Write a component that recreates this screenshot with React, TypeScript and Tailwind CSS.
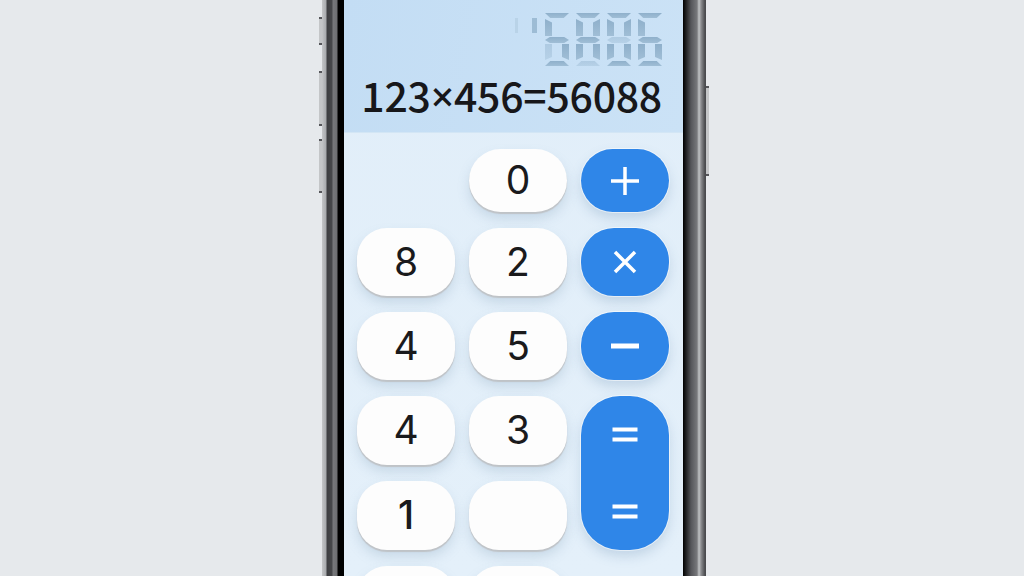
import React from "react";

const SEG = "bg-[linear-gradient(180deg,#8fb0cb,#a0bed6)]";

function Digit({ on, faint = "" }: { on: string; faint?: string }) {
  const o = (k: string) => (on.includes(k) ? "opacity-100" : faint.includes(k) ? "opacity-45" : "opacity-0");
  return (
    <div className="grid grid-cols-[7px_8px_7px] grid-rows-[5px_17px_6px_16px_5px] gap-[1px] w-[24px] h-[53px]" aria-hidden="true">
      <div className={`col-span-3 ${SEG} [clip-path:polygon(0_0,100%_0,78%_100%,22%_100%)] ${o("a")}`} />
      <div className={`${SEG} [clip-path:polygon(0_0,100%_20%,100%_100%,0_100%)] ${o("f")}`} />
      <div />
      <div className={`${SEG} [clip-path:polygon(0_20%,100%_0,100%_100%,0_100%)] ${o("b")}`} />
      <div className={`col-span-3 ${SEG} [clip-path:polygon(20%_0,80%_0,100%_50%,80%_100%,20%_100%,0_50%)] ${o("g")}`} />
      <div className={`${SEG} [clip-path:polygon(0_0,100%_0,100%_82%,0_100%)] ${o("e")}`} />
      <div />
      <div className={`${SEG} [clip-path:polygon(0_0,100%_0,100%_100%,0_82%)] ${o("c")}`} />
      <div className={`col-span-3 ${SEG} [clip-path:polygon(22%_0,78%_0,100%_100%,0_100%)] ${o("d")}`} />
    </div>
  );
}

function Key({ children, className = "" }: { children?: React.ReactNode; className?: string }) {
  return (
    <div
      className={`flex items-center justify-center bg-[#fdfdfd] text-[#1a1a1c] text-[39px] font-[Inter,sans-serif] rounded-[30px] shadow-[0_2px_1px_#bfc3c7,0_7px_12px_rgba(120,150,180,0.25)] ${className}`}
    >
      {children}
    </div>
  );
}

function Blue({ children, className = "" }: { children?: React.ReactNode; className?: string }) {
  return (
    <div
      className={`flex items-center justify-center bg-[#2f86e8] rounded-[33px] shadow-[0_0_0_1px_rgba(255,255,255,0.55),0_6px_12px_rgba(90,130,170,0.25)] ${className}`}
    >
      {children}
    </div>
  );
}

function Equals() {
  return (
    <svg width="26" height="15" viewBox="0 0 26 15" fill="#fff">
      <rect x="0.5" y="0.5" width="25" height="4" />
      <rect x="0.5" y="10.5" width="25" height="4" />
    </svg>
  );
}

export default function App() {
  return (
    <div className="w-[1024px] h-[576px] overflow-hidden bg-[#e6e9ec] flex justify-center pl-[4px]">
      <div className="relative w-[384px] h-[576px] pl-[22px] pr-[23px] bg-[linear-gradient(90deg,#c4c6c8_0,#a8aaad_4px,#3d3e41_5px,#47484b_10px,#77787b_11px,#6e6f72_15px,#000_16px,#000_361px,#55565a_369px,#77787b_375px,#c2c4c6_377px,#8c8d90_379px,#4a4b4e_383px,#4a4b4e_384px)]">
        <div className="absolute left-[-3px] top-[17px] w-[3px] h-[28px] bg-[#c4c6c8] border-y-2 border-[#55565a]" />
        <div className="absolute left-[-3px] top-[71px] w-[3px] h-[55px] bg-[#c4c6c8] border-y-2 border-[#55565a]" />
        <div className="absolute left-[-3px] top-[139px] w-[3px] h-[54px] bg-[#c4c6c8] border-y-2 border-[#55565a]" />
        <div className="absolute right-[-3px] top-[86px] w-[3px] h-[90px] bg-[#c4c6c8] border-y-2 border-[#55565a]" />

        <div className="h-[576px] w-[339px] flex flex-col overflow-hidden bg-[linear-gradient(180deg,#e1eef9,#e4f0fa)]">
          <div className="h-[133px] shrink-0 flex flex-col items-end pr-[21px] pt-[13px] bg-[linear-gradient(100deg,#c3ddf4,#cbe2f6)] border-b border-[#d3e6f5]">
            <div className="flex h-[53px] gap-[7px] items-start" role="img" aria-label="5806">
              <div className="flex gap-[14px] mt-[5px] mr-[1px]">
                <div className="w-[3px] h-[15px] bg-[#b9d3e8]" />
                <div className="w-[5px] h-[15px] bg-[#9dbcd5]" />
              </div>
              <Digit on="afgcd" faint="e" />
              <Digit on="abfegc" faint="d" />
              <Digit on="abfecd" faint="g" />
              <Digit on="afgecd" />
            </div>
            <div className="mt-[4px] text-[41px] leading-[48px] tracking-[-0.25px] font-medium text-[#17171a] font-['Noto_Sans_CJK_SC','Noto_Sans',sans-serif] whitespace-nowrap">
              123<span className="font-['Noto_Sans',sans-serif]">×</span>456=56088
            </div>
          </div>

          <div className="grid grid-cols-[98px_98px_88px] grid-rows-[63px_68px_68px_69px_69px_69px] gap-x-[14px] gap-y-[16px] pl-[13px] pt-[16px]">
            <div />
            <Key className="rounded-[32px]">0</Key>
            <Blue>
              <svg width="30" height="30" viewBox="0 0 30 30" stroke="#fff" strokeWidth="3.5">
                <path d="M1 15H29M15 1V29" />
              </svg>
            </Blue>

            <Key>8</Key>
            <Key>2</Key>
            <Blue>
              <svg width="24" height="24" viewBox="0 0 24 24" stroke="#fff" strokeWidth="3.5">
                <path d="M2 2L22 22M22 2L2 22" />
              </svg>
            </Blue>

            <Key>4</Key>
            <Key>5</Key>
            <Blue>
              <svg width="28" height="6" viewBox="0 0 28 6" fill="#fff">
                <rect width="28" height="5" y="0.5" />
              </svg>
            </Blue>

            <Key>4</Key>
            <Key>3</Key>
            <Blue className="row-span-2 flex-col rounded-[39px]">
              <div className="flex-1 flex items-center justify-center">
                <Equals />
              </div>
              <div className="flex-1 flex items-center justify-center">
                <Equals />
              </div>
            </Blue>

            <Key className="font-medium">1</Key>
            <Key />

            <Key />
            <Key />
          </div>
        </div>
      </div>
    </div>
  );
}
